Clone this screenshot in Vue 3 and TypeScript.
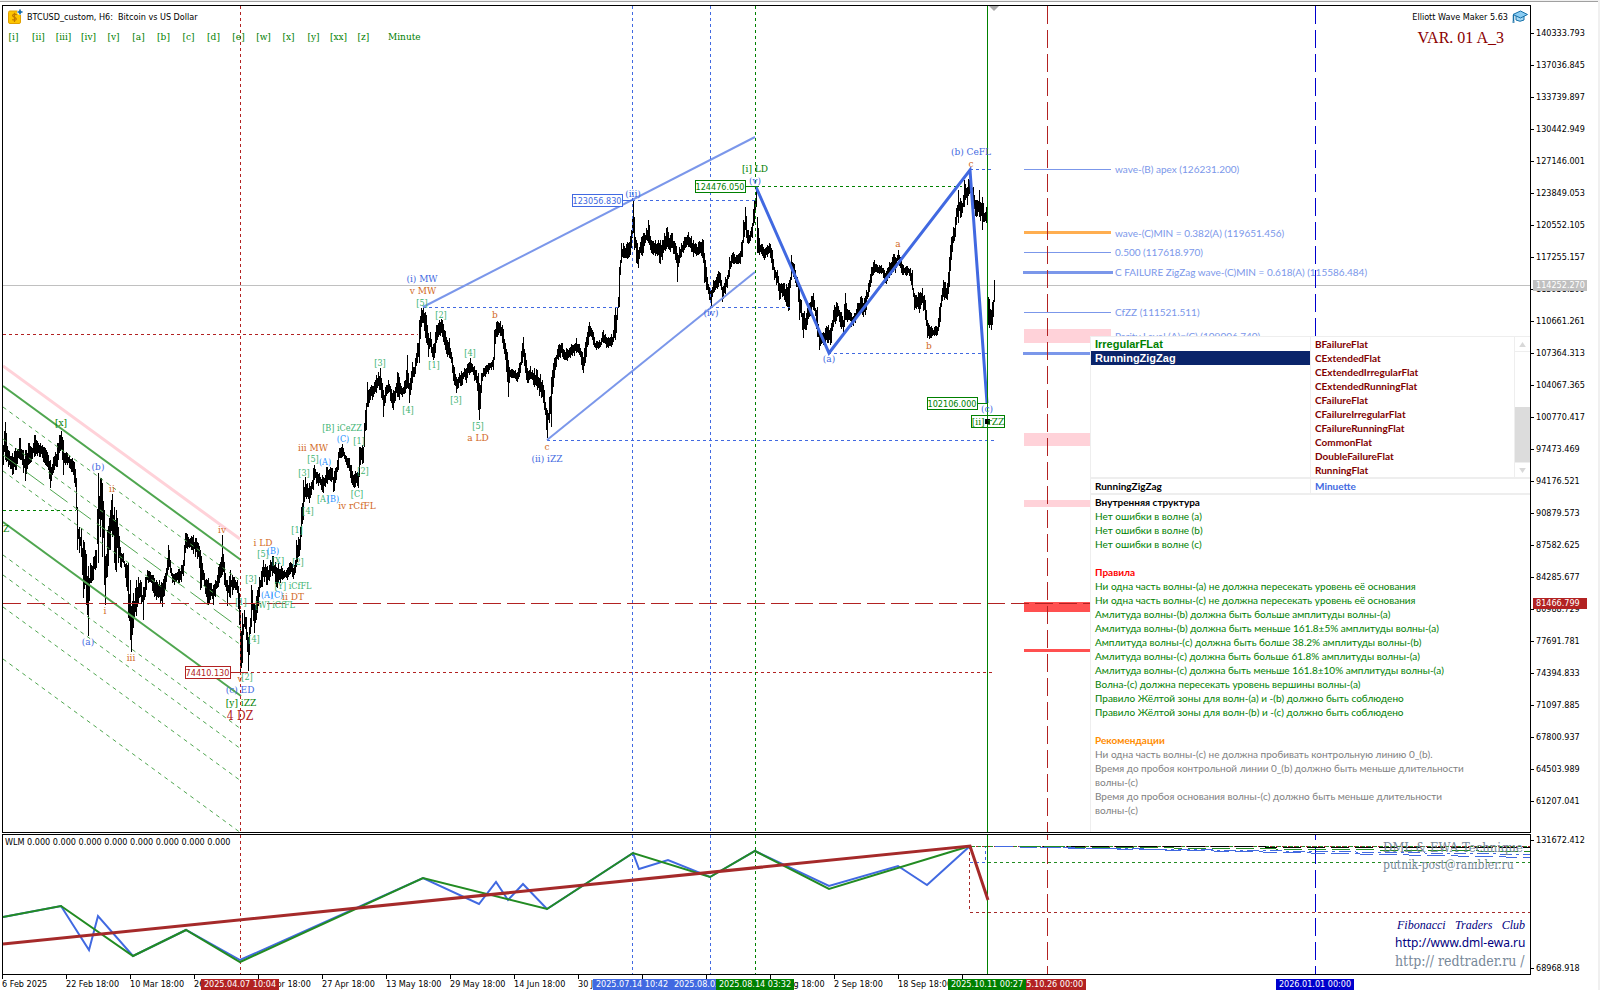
<script setup lang="ts">
type Band = [number, number, number]
type Point = [number, number]

interface WaveLabel {
  t: string
  x: number
  y: number
  k: string
}

interface Tag {
  t: string
  x: number
  k: string
}

const degrees = ['[i]', '[ii]', '[iii]', '[iv]', '[v]', '[a]', '[b]', '[c]', '[d]', '[e]', '[w]', '[x]', '[y]', '[xx]', '[z]']

// Price envelope: x, highest y, lowest y
const bands: Band[] = [
  [3, 445, 465], [5, 422, 460], [8, 450, 467], [12, 453, 475], [15, 448, 470], [20, 438, 460], [23, 450, 473], [25, 450, 481],
  [28, 443, 465], [31, 447, 462], [34, 435, 457], [38, 443, 453], [42, 445, 458], [45, 448, 465], [48, 455, 470], [50, 460, 488],
  [53, 457, 473], [57, 443, 467], [59, 435, 453], [61, 431, 450], [63, 440, 475], [65, 453, 465], [68, 457, 463], [72, 458, 472],
  [74, 462, 483], [76, 478, 510], [77, 507, 550], [79, 527, 553], [81, 528, 557], [83, 540, 598], [85, 550, 585], [88, 566, 636],
  [90, 563, 583], [93, 557, 580], [96, 550, 568], [98, 473, 563], [100, 478, 537], [102, 483, 557], [104, 510, 585], [105, 556, 605],
  [107, 530, 577], [110, 510, 550], [112, 494, 537], [114, 507, 563], [116, 510, 572], [118, 527, 563], [120, 547, 567], [123, 553, 563],
  [126, 563, 587], [128, 563, 618], [130, 580, 640], [131, 606, 652], [133, 593, 628], [136, 580, 616], [138, 577, 603], [140, 580, 597],
  [143, 587, 620], [145, 577, 597], [147, 570, 580], [150, 572, 582], [153, 575, 593], [156, 580, 600], [159, 580, 597], [162, 583, 607],
  [165, 573, 590], [167, 558, 575], [168, 545, 570], [170, 560, 573], [172, 573, 583], [175, 573, 582], [180, 571, 580], [183, 560, 576],
  [185, 533, 553], [188, 537, 547], [192, 537, 550], [195, 538, 557], [198, 543, 557], [200, 550, 590], [203, 570, 580], [207, 580, 603],
  [210, 583, 600], [213, 585, 605], [215, 580, 597], [218, 567, 587], [221, 557, 577], [222, 535, 575], [224, 562, 585], [227, 580, 606],
  [230, 570, 598], [233, 577, 590], [237, 580, 593], [239, 593, 625], [240, 610, 672], [242, 613, 663], [244, 610, 627], [246, 617, 640],
  [248, 637, 671], [249, 627, 655], [251, 585, 627], [252, 590, 610], [254, 603, 633], [257, 590, 613], [259, 577, 597], [262, 567, 587],
  [263, 560, 577], [266, 567, 585], [268, 570, 580], [270, 560, 577], [273, 556, 573], [276, 567, 587], [278, 563, 583], [282, 568, 580],
  [285, 572, 577], [288, 567, 577], [291, 563, 572], [293, 568, 579], [295, 560, 573], [296, 540, 567], [298, 537, 557], [300, 527, 550],
  [301, 507, 537], [303, 480, 520], [305, 477, 497], [307, 483, 497], [309, 483, 503], [311, 482, 495], [313, 468, 490], [314, 465, 480],
  [317, 472, 483], [320, 477, 485], [323, 477, 493], [326, 467, 483], [328, 470, 480], [332, 468, 480], [333, 477, 492], [336, 467, 480],
  [338, 452, 470], [339, 448, 458], [342, 444, 457], [345, 455, 462], [348, 458, 468], [351, 465, 483], [353, 475, 487], [356, 473, 483],
  [358, 473, 488], [359, 447, 477], [361, 448, 460], [363, 447, 463], [364, 423, 447], [366, 403, 430], [367, 382, 407], [370, 387, 400],
  [375, 380, 392], [380, 368, 390], [383, 390, 417], [385, 387, 403], [388, 380, 393], [393, 390, 410], [397, 372, 397], [402, 388, 397],
  [405, 380, 393], [407, 355, 388], [409, 383, 403], [412, 362, 383], [414, 367, 377], [417, 343, 363], [419, 320, 363], [421, 308, 327],
  [423, 308, 323], [426, 315, 343], [428, 333, 357], [430, 332, 347], [432, 347, 357], [434, 343, 358], [436, 325, 343], [438, 323, 337],
  [442, 320, 337], [444, 330, 345], [447, 340, 357], [449, 338, 358], [452, 357, 373], [454, 367, 385], [456, 377, 393], [459, 373, 383],
  [462, 373, 385], [464, 368, 377], [466, 368, 383], [468, 363, 373], [470, 358, 373], [473, 367, 375], [476, 370, 383], [478, 373, 410],
  [479, 383, 420], [481, 373, 393], [483, 368, 377], [487, 365, 372], [490, 363, 368], [493, 357, 370], [494, 330, 360], [496, 322, 337],
  [499, 323, 333], [502, 325, 343], [505, 343, 360], [508, 360, 397], [510, 370, 377], [513, 370, 378], [517, 372, 382], [520, 362, 373],
  [523, 337, 357], [525, 353, 373], [527, 368, 383], [532, 370, 380], [537, 370, 390], [542, 380, 397], [544, 390, 410], [547, 410, 438],
  [549, 397, 423], [551, 377, 427], [553, 363, 387], [555, 357, 370], [558, 345, 360], [561, 343, 353], [564, 350, 360], [568, 350, 358],
  [573, 345, 353], [576, 338, 353], [580, 348, 357], [583, 357, 373], [586, 337, 357], [589, 322, 337], [592, 330, 340], [595, 343, 348],
  [600, 342, 347], [603, 330, 343], [607, 338, 347], [612, 337, 345], [615, 308, 340], [617, 308, 320], [619, 267, 307], [621, 243, 263],
  [625, 248, 258], [629, 242, 257], [631, 230, 248], [633, 201, 233], [634, 217, 250], [636, 240, 263], [638, 250, 268], [640, 242, 253],
  [643, 233, 253], [645, 235, 243], [648, 220, 243], [651, 240, 253], [654, 243, 253], [657, 243, 256], [659, 243, 263], [662, 240, 260],
  [664, 233, 250], [667, 227, 247], [669, 238, 250], [672, 233, 248], [675, 243, 260], [677, 253, 282], [679, 247, 263], [682, 245, 252],
  [685, 237, 248], [688, 232, 247], [690, 238, 248], [693, 240, 257], [697, 247, 255], [700, 242, 253], [703, 240, 263], [704, 253, 283],
  [707, 277, 290], [709, 287, 300], [711, 290, 306], [713, 280, 293], [716, 277, 288], [719, 272, 283], [721, 280, 290], [722, 287, 302],
  [724, 283, 293], [727, 275, 288], [729, 257, 277], [732, 253, 263], [735, 257, 263], [739, 253, 263], [742, 240, 257], [743, 220, 243],
  [745, 207, 230], [747, 230, 243], [749, 235, 243], [752, 223, 238], [754, 200, 223], [756, 187, 207], [757, 217, 253], [760, 245, 252],
  [763, 247, 258], [766, 247, 255], [769, 243, 253], [772, 250, 270], [774, 267, 280], [777, 270, 283], [779, 283, 300], [781, 283, 293],
  [784, 283, 300], [787, 287, 307], [789, 280, 310], [791, 255, 280], [793, 263, 277], [795, 270, 283], [797, 277, 287], [799, 283, 320],
  [801, 300, 317], [803, 313, 338], [806, 313, 330], [809, 303, 317], [813, 293, 310], [817, 307, 337], [819, 330, 350], [822, 333, 343],
  [827, 327, 343], [831, 323, 343], [833, 310, 327], [837, 303, 317], [840, 312, 327], [843, 320, 333], [845, 293, 320], [848, 310, 320],
  [852, 317, 325], [855, 313, 323], [857, 303, 317], [860, 297, 313], [863, 303, 317], [866, 290, 310], [868, 283, 297], [871, 267, 283],
  [874, 260, 273], [878, 267, 273], [882, 268, 273], [885, 273, 283], [888, 267, 277], [892, 257, 272], [895, 257, 273], [898, 250, 260],
  [901, 258, 273], [904, 268, 273], [908, 268, 273], [912, 270, 290], [914, 293, 310], [917, 297, 307], [919, 293, 313], [922, 288, 303],
  [925, 300, 320], [927, 320, 338], [930, 327, 338], [933, 330, 335], [937, 327, 335], [939, 307, 327], [943, 280, 297], [947, 283, 300],
  [949, 257, 287], [951, 237, 260], [953, 227, 243], [955, 217, 237], [958, 190, 223], [962, 203, 213], [964, 180, 207], [967, 187, 205],
  [970, 171, 193], [973, 187, 210], [976, 200, 217], [979, 190, 217], [982, 197, 230], [984, 213, 222], [986, 207, 223], [987, 223, 297],
  [988, 297, 325], [991, 310, 330], [993, 300, 317], [994, 280, 302],
]

function buildBars(): string {
  let seed = 7
  const rnd = (): number => {
    seed = (seed * 16807) % 2147483647
    return seed / 2147483647
  }
  const out: string[] = []
  for (let i = 0; i < bands.length - 1; i++) {
    const [x0, t0, b0] = bands[i]
    const [x1, t1, b1] = bands[i + 1]
    for (let x = x0; x < x1; x++) {
      const f = (x - x0) / (x1 - x0)
      const top = t0 + (t1 - t0) * f
      const bottom = b0 + (b1 - b0) * f
      const span = bottom - top
      const exact = x === x0
      const a = exact ? top : top + rnd() * span * 0.5 - 3
      const b = exact ? bottom : bottom - rnd() * span * 0.5 + 3
      out.push(`M${x}.5 ${Math.round(a)}V${Math.max(Math.round(b), Math.round(a) + 4)}`)
    }
  }
  out.push('M994.5 280V302')
  return out.join('')
}
const bars = buildBars()

const channelDashes = [407, 439, 471, 555, 575, 607, 659]
const channelRun = 174

const labels: WaveLabel[] = [
  { t: '[x]', x: 61, y: 423, k: 'green' }, { t: '(b)', x: 98, y: 467, k: 'royal' }, { t: 'ii', x: 112, y: 489, k: 'choc' },
  { t: 'iv', x: 222, y: 530, k: 'choc' }, { t: 'i LD', x: 263, y: 543, k: 'choc' }, { t: '[5]', x: 263, y: 554, k: 'sea' },
  { t: '(B)', x: 273, y: 551, k: 'dodger' }, { t: '[X]', x: 278, y: 561, k: 'sea' }, { t: '[3]', x: 251, y: 579, k: 'sea' },
  { t: '[1]', x: 241, y: 602, k: 'sea' }, { t: '[Y] iCfFL', x: 293, y: 586, k: 'sea' }, { t: '(A)', x: 267, y: 595, k: 'dodger' },
  { t: '(C)', x: 277, y: 595, k: 'dodger' }, { t: 'ii DT', x: 293, y: 597, k: 'choc' }, { t: '[W] iCfFL', x: 275, y: 605, k: 'sea' },
  { t: '[4]', x: 254, y: 639, k: 'sea' }, { t: 'i', x: 105, y: 611, k: 'choc' }, { t: '(a)', x: 88, y: 642, k: 'royal' },
  { t: 'iii', x: 131, y: 658, k: 'choc' }, { t: 'v', x: 240, y: 679, k: 'choc' }, { t: '[2]', x: 247, y: 677, k: 'sea' },
  { t: '(c) ED', x: 240, y: 690, k: 'royal' }, { t: '[y] iZZ', x: 241, y: 703, k: 'green' }, { t: '4 DZ', x: 240, y: 717, k: 'brick' },
  { t: '[1]', x: 297, y: 530, k: 'sea' }, { t: '[2]', x: 298, y: 562, k: 'sea' }, { t: '[4]', x: 308, y: 511, k: 'sea' },
  { t: '[3]', x: 304, y: 473, k: 'sea' }, { t: 'iii MW', x: 313, y: 448, k: 'choc' }, { t: '[5]', x: 313, y: 459, k: 'sea' },
  { t: '(A)', x: 325, y: 462, k: 'dodger' }, { t: '[A]', x: 323, y: 499, k: 'sea' }, { t: '(B)', x: 333, y: 499, k: 'dodger' },
  { t: 'iv rCfFL', x: 357, y: 506, k: 'choc' }, { t: '[C]', x: 357, y: 494, k: 'sea' }, { t: '[B] iCeZZ', x: 342, y: 428, k: 'sea' },
  { t: '(C)', x: 343, y: 439, k: 'dodger' }, { t: '[1]', x: 359, y: 441, k: 'sea' }, { t: '[2]', x: 363, y: 471, k: 'sea' },
  { t: '[4]', x: 408, y: 410, k: 'sea' }, { t: '[3]', x: 380, y: 363, k: 'sea' }, { t: '[5]', x: 422, y: 303, k: 'sea' },
  { t: 'v MW', x: 423, y: 291, k: 'choc' }, { t: '(i) MW', x: 422, y: 279, k: 'royal' }, { t: '[2]', x: 441, y: 315, k: 'sea' },
  { t: '[1]', x: 434, y: 365, k: 'sea' }, { t: '[4]', x: 470, y: 353, k: 'sea' }, { t: '[3]', x: 456, y: 400, k: 'sea' },
  { t: '[5]', x: 478, y: 426, k: 'sea' }, { t: 'a LD', x: 478, y: 438, k: 'choc' }, { t: 'b', x: 495, y: 315, k: 'choc' },
  { t: 'c', x: 547, y: 447, k: 'choc' }, { t: '(ii) iZZ', x: 547, y: 459, k: 'royal' }, { t: '(iii)', x: 633, y: 194, k: 'royal' },
  { t: '(iv)', x: 711, y: 313, k: 'royal' }, { t: '[i] LD', x: 755, y: 169, k: 'green' }, { t: '(v)', x: 755, y: 181, k: 'royal' },
  { t: '(a)', x: 829, y: 359, k: 'royal' }, { t: 'a', x: 898, y: 244, k: 'choc' }, { t: 'b', x: 929, y: 346, k: 'choc' },
  { t: 'c', x: 971, y: 164, k: 'choc' }, { t: '(b) CeFL', x: 971, y: 152, k: 'royal' }, { t: '(c)', x: 987, y: 409, k: 'royal' },
  { t: '[ii] rZZ', x: 988, y: 422, k: 'green' }, { t: 'Z', x: 6, y: 529, k: 'green' },
]

const priceTags = [
  { t: '123056.830', x: 572, y: 194, w: 50, k: 'royal', to: 632 },
  { t: '124476.050', x: 695, y: 180, w: 50, k: 'green', to: 756 },
  { t: '102106.000', x: 927, y: 397, w: 50, k: 'green', to: 987 },
  { t: '74410.130', x: 185, y: 666, w: 45, k: 'brick', to: 245 },
]

const levelTexts = [
  { t: 'wave-(B) apex (126231.200)', y: 170 },
  { t: 'wave-(C)MIN = 0.382(A) (119651.456)', y: 234 },
  { t: '0.500 (117618.970)', y: 253 },
  { t: 'C FAILURE ZigZag wave-(C)MIN = 0.618(A) (115586.484)', y: 273 },
  { t: 'CfZZ (111521.511)', y: 313 },
  { t: 'Parity Level (A)=(C) (109006.740)', y: 337 },
]

const prices = Array.from({ length: 25 }, (_, i) => (140333.793 - 3296.948 * i).toFixed(3))

const dates = ['6 Feb 2025', '22 Feb 18:00', '10 Mar 18:00', '26 Mar 18:00', '11 Apr 18:00', '27 Apr 18:00', '13 May 18:00', '29 May 18:00', '14 Jun 18:00', '30 Jun 18:00', '16 Jul 18:00', '1 Aug 18:00', '17 Aug 18:00', '2 Sep 18:00', '18 Sep 18:00', '4 Oct 18:00']

const dateTags: Tag[] = [
  { t: '2025.04.07 10:04', x: 240, k: 'bg-brick' },
  { t: '2025.07.14 10:42', x: 632, k: 'bg-royal' },
  { t: '2025.08.03 09:13', x: 710, k: 'bg-royal' },
  { t: '2025.08.14 03:32', x: 755, k: 'bg-green' },
  { t: '2025.10.26 00:00', x: 1047, k: 'bg-brick' },
  { t: '2025.10.11 00:27', x: 987, k: 'bg-green' },
  { t: '2026.01.01 00:00', x: 1315, k: 'bg-blue' },
]

const pts = (p: Point[]): string => p.map((q) => q.join(',')).join(' ')
const greenWave = pts([[3, 917], [61, 906], [133, 956], [186, 930], [240, 962], [423, 878], [547, 909], [633, 853], [710, 877], [755, 851], [829, 889], [970, 846]])
const blueWave = pts([[3, 917], [61, 906], [89, 950], [98, 916], [133, 956], [186, 930], [240, 960], [423, 878], [479, 904], [496, 882], [508, 900], [523, 884], [547, 909], [633, 853], [639, 869], [668, 860], [710, 877], [755, 851], [829, 886], [898, 866], [927, 885], [970, 846]])
const redWave = pts([[3, 944], [970, 846], [988, 900]])

const patterns = ['BFailureFlat', 'CExtendedFlat', 'CExtendedIrregularFlat', 'CExtendedRunningFlat', 'CFailureFlat', 'CFailureIrregularFlat', 'CFailureRunningFlat', 'CommonFlat', 'DoubleFailureFlat', 'RunningFlat']

const structure = ['Нет ошибки в волне (a)', 'Нет ошибки в волне (b)', 'Нет ошибки в волне (c)']
const rules = [
  'Ни одна часть волны-(a) не должна пересекать уровень её основания',
  'Ни одна часть волны-(c) не должна пересекать уровень её основания',
  'Амлитуда волны-(b) должна быть больше амплитуды волны-(a)',
  'Амлитуда волны-(b) должна быть меньше 161.8±5% амплитуды волны-(a)',
  'Амплитуда волны-(c) должна быть болше 38.2% амплитуды волны-(b)',
  'Амлитуда волны-(c) должна быть больше 61.8% амплитуды волны-(a)',
  'Амлитуда волны-(c) должна быть меньше 161.8±10% амплитуды волны-(a)',
  'Волна-(c) должна пересекать уровень вершины волны-(a)',
  'Правило Жёлтой зоны для волн-(a) и -(b) должно быть соблюдено',
  'Правило Жёлтой зоны для волн-(b) и -(c) должно быть соблюдено',
]
const advice = [
  'Ни одна часть волны-(c) не должна пробивать контрольную линию 0_(b).',
  'Время до пробоя контрольной линии 0_(b) должно быть меньше длительности волны-(c)',
  'Время до пробоя основания волны-(c) должно быть меньше длительности волны-(c)',
]
</script>

<template>
  <main class="terminal">
    <section class="pane price-pane" aria-label="BTCUSD chart">
      <svg class="canvas" aria-hidden="true">
        <g transform="translate(-3 -6)">
          <path d="M989 6h10l-5 5z" fill="#a9a9a9" />
          <g class="crisp">
            <line class="silver" x1="3" x2="1530" y1="285.5" y2="285.5" />
            <rect x="1024" y="169" width="87" height="1" class="level" />
            <rect x="1024" y="231" width="87" height="3" fill="#ffae50" />
            <rect x="1024" y="252" width="87" height="1" class="level" />
            <rect x="1023" y="271" width="90" height="3" class="level" />
            <rect x="1024" y="312" width="87" height="1" class="level" />
            <rect x="1024" y="329" width="87" height="14" class="zone" />
            <rect x="1023" y="352" width="90" height="3" class="level" />
            <rect x="1024" y="433" width="87" height="13" class="zone" />
            <rect x="1024" y="500" width="87" height="7" class="zone" />
            <rect x="1024" y="602" width="87" height="10" class="alert" />
            <rect x="1024" y="649" width="87" height="3" class="alert" />
            <path :d="bars" class="bars" />
          </g>
          <line class="pink-line" x1="3" y1="366" x2="240" y2="539" />
          <line class="channel" x1="3" y1="386" x2="241" y2="560" />
          <line class="channel" x1="3" y1="522" x2="241" y2="696" />
          <line v-for="y in channelDashes" :key="y" class="channel-dash" x1="3" :y1="y" x2="241" :y2="y + channelRun" />
          <line class="channel-long" x1="3" y1="455" x2="241" y2="629" />
          <g class="crisp">
            <line class="dash s-green" x1="3" x2="76" y1="510.5" y2="510.5" />
            <line class="dash s-brick" x1="3" x2="418" y1="334.5" y2="334.5" />
            <line class="long s-brick" x1="3" x2="1100" y1="603.5" y2="603.5" />
            <line class="dash s-brick" x1="245" x2="994" y1="672.5" y2="672.5" />
            <line class="dash s-royal" x1="423" x2="618" y1="307.5" y2="307.5" />
            <line class="dash s-royal" x1="710" x2="790" y1="307.5" y2="307.5" />
            <line class="dash s-royal" x1="632" x2="755" y1="200.5" y2="200.5" />
            <line class="dash s-green" x1="756" x2="962" y1="186.5" y2="186.5" />
            <line class="dash s-royal" x1="970" x2="992" y1="169.5" y2="169.5" />
            <line class="dash s-royal" x1="828" x2="987" y1="353.5" y2="353.5" />
            <line class="dash s-royal" x1="547" x2="994" y1="440.5" y2="440.5" />
          </g>
          <polyline class="trend" points="423,307 755,137" />
          <polyline class="trend" points="547,440 755,272" />
          <polyline class="wave" points="756,187 829,353 970,170 987,403" />
          <g class="crisp">
            <line class="dash s-brick" x1="240.5" x2="240.5" y1="6" y2="832" />
            <line class="dash s-royal" x1="632.5" x2="632.5" y1="6" y2="832" />
            <line class="dash s-royal" x1="710.5" x2="710.5" y1="6" y2="832" />
            <line class="dash s-green" x1="755.5" x2="755.5" y1="6" y2="832" />
            <line class="s-green" x1="987.5" x2="987.5" y1="6" y2="832" />
            <line class="long s-brick" x1="1047.5" x2="1047.5" y1="6" y2="832" />
            <line class="long s-blue" x1="1315.5" x2="1315.5" y1="6" y2="832" />
            <rect x="971.5" y="415.5" width="33" height="12" class="s-green hollow" />
            <rect x="985" y="419" width="5" height="5" />
          </g>
          <g v-for="p in priceTags" :key="p.t" :class="'t-' + p.k">
            <line :x1="p.x + p.w" :x2="p.to" :y1="p.y + 6.5" :y2="p.y + 6.5" :class="'crisp s-' + p.k" />
            <rect :x="p.x + 0.5" :y="p.y + 0.5" :width="p.w" height="12" class="crisp tag-box" :class="'s-' + p.k" />
            <text class="tag-text" :x="p.x + p.w / 2" :y="p.y + 10">{{ p.t }}</text>
          </g>
          <text v-for="(l, i) in labels" :key="i" :x="l.x" :y="l.y + 3" class="wave-label" :class="'t-' + l.k">{{ l.t }}</text>
          <text v-for="l in levelTexts" :key="l.t" x="1115" :y="l.y + 3" class="level-text">{{ l.t }}</text>
        </g>
      </svg>

      <header class="title-row">
        <svg class="coin" viewBox="0 0 15 15" aria-hidden="true">
          <rect x="0.5" y="2" width="12" height="12.5" rx="1.5" fill="#fdc500" stroke="#e0a000" />
          <path d="M8.800 5.800Q6.500 4.600 5 5.700T6.200 8.100T8.200 10.500T4.200 10.700M6.500 3.700V13" fill="none" stroke="#c27a00" stroke-width="1.200" />
          <path d="M12 0v6M9 3h6" stroke="#fff" stroke-width="3" />
          <path d="M12 0.500v5M9.500 3h5" stroke="#0a64a8" stroke-width="1.600" />
        </svg>
        <h1>BTCUSD_custom, H6:&nbsp; Bitcoin vs US Dollar</h1>
        <span class="expert">Elliott Wave Maker 5.63</span>
        <svg class="cap" viewBox="0 0 16 13" aria-hidden="true">
          <path d="M4 6v4q4 2.500 8 0V6" fill="#a5d8f5" stroke="#1670a8" />
          <path d="M1 4.500L8.500 1L15.500 4.500L8.500 8Z" fill="#8accf2" stroke="#1670a8" />
          <path d="M1.500 5v6M0.500 12h2" stroke="#1670a8" stroke-width="1.500" />
        </svg>
      </header>
      <nav class="degrees" aria-label="Wave labels">
        <button v-for="d in degrees" :key="d" type="button">{{ d }}</button>
        <button type="button" class="degree-name">Minute</button>
        <strong class="variant">VAR. 01 A_3</strong>
      </nav>

      <aside class="analysis" aria-label="Wave analysis">
        <div class="lists">
          <div class="list models">
            <button type="button" class="model">IrregularFLat</button>
            <button type="button" class="model selected" aria-pressed="true">RunningZigZag</button>
          </div>
          <div class="list patterns">
            <button v-for="p in patterns" :key="p" type="button">{{ p }}</button>
          </div>
          <div class="scroll">
            <button type="button" aria-label="Scroll up"><svg viewBox="0 0 8 6"><path d="M4 0L8 6H0Z" /></svg></button>
            <div class="track"><div class="thumb"></div></div>
            <button type="button" aria-label="Scroll down"><svg viewBox="0 0 8 6"><path d="M0 0H8L4 6Z" /></svg></button>
          </div>
        </div>
        <div class="summary">
          <span class="picked">RunningZigZag</span>
          <span class="degree">Minuette</span>
        </div>
        <div class="report">
          <h2 class="head-black">Внутренняя структура</h2>
          <p v-for="s in structure" :key="s" class="ok">{{ s }}</p>
          <h2 class="head-red">Правила</h2>
          <p v-for="s in rules" :key="s" class="ok">{{ s }}</p>
          <h2 class="head-orange">Рекомендации</h2>
          <p v-for="s in advice" :key="s" class="hint">{{ s }}</p>
        </div>
      </aside>
    </section>

    <aside class="axis price-axis" aria-label="Price scale">
      <span v-for="p in prices" :key="p" class="price">{{ p }}</span>
      <span class="price-tag last">114252.270</span>
      <span class="price-tag stop">81466.799</span>
    </aside>

    <section class="pane wave-pane" aria-label="WLM indicator">
      <svg class="canvas" aria-hidden="true">
        <g transform="translate(-3 -835)">
          <g class="crisp">
            <line class="dash s-brick" x1="240.5" x2="240.5" y1="835" y2="974" />
            <line class="dash s-royal" x1="632.5" x2="632.5" y1="835" y2="974" />
            <line class="dash s-royal" x1="710.5" x2="710.5" y1="835" y2="974" />
            <line class="dash s-green" x1="755.5" x2="755.5" y1="835" y2="974" />
            <line class="s-green" x1="987.5" x2="987.5" y1="835" y2="974" />
            <line class="long s-brick" x1="1047.5" x2="1047.5" y1="822" y2="974" />
            <line class="long s-blue" x1="1315.5" x2="1315.5" y1="822" y2="974" />
            <line class="dash s-brown" x1="970" x2="1530" y1="912.5" y2="912.5" />
            <line class="dash s-brown" x1="969.5" x2="969.5" y1="846" y2="912" />
            <line class="dash s-forest" x1="970" x2="1530" y1="862.5" y2="862.5" />
            <polyline class="dash s-royal" points="970,862.5 985.5,862.5 985.5,846" />
            <line class="dash s-brown" x1="970" x2="1530" y1="846.5" y2="846.5" />
            <line class="dash s-forest" x1="972" x2="1530" y1="846.5" y2="846.5" />
            <line class="long s-black" x1="995" x2="1530" y1="846.5" y2="847.5" />
            <line class="long s-forest" x1="1020" x2="1530" y1="846.5" y2="851.5" />
            <line class="long s-royal" x1="995" x2="1530" y1="846.5" y2="857.5" />
            <line class="dashdot s-royal" x1="1040" x2="1530" y1="847.5" y2="854.5" />
          </g>
          <polyline class="thin-wave s-royal" :points="blueWave" />
          <polyline class="thin-wave s-forest" :points="greenWave" />
          <polyline class="fat-wave" :points="redWave" />
        </g>
      </svg>
      <p class="readout">WLM 0.000 0.000 0.000 0.000 0.000 0.000 0.000 0.000</p>
      <div class="credits">
        <p class="slate technique">DML &amp; EWA Technique</p>
        <p class="slate mail">putnik-post@rambler.ru</p>
        <p class="club"><span>Fibonacci</span><span>Traders</span><span>Club</span></p>
        <a class="site" href="http://www.dml-ewa.ru">http://www.dml-ewa.ru</a>
        <a class="slate second" href="http://redtrader.ru/">http:// redtrader.ru /</a>
      </div>
    </section>

    <aside class="axis wave-axis" aria-label="Indicator scale">
      <span>131672.412</span>
      <span>68968.918</span>
    </aside>

    <footer class="axis time-axis" aria-label="Time scale">
      <span v-for="d in dates" :key="d" class="date">{{ d }}</span>
      <span v-for="d in dateTags" :key="d.t" class="date-tag" :class="d.k" :style="{ left: d.x - 41 + 'px' }">{{ d.t }}</span>
    </footer>
  </main>
</template>

<style>
body {
  margin: 0;
  background: #fff;
}
</style>

<style scoped>
* {
  box-sizing: border-box;
}
h1, h2, p {
  margin: 0;
  font-size: inherit;
  font-weight: inherit;
}
button {
  display: block;
  margin: 0;
  padding: 0;
  border: 0;
  background: none;
  font: inherit;
  color: inherit;
  text-align: left;
  cursor: pointer;
}
.terminal {
  display: grid;
  grid-template-columns: minmax(0, 1fr) 67px;
  grid-template-rows: minmax(0, 1fr) 142px 15px;
  height: 100vh;
  min-height: 800px;
  padding: 4px 0 0 2px;
  border-top: 1px solid #f0f0f0;
  border-right: 2px solid #f0f0f0;
  box-shadow: inset 0 1px 0 #a0a0a0;
  font-family: "DejaVu Sans Condensed", "Noto Sans", sans-serif;
  font-size: 9px;
  line-height: 14px;
  color: #000;
  overflow: hidden;
}
.pane {
  position: relative;
  border: 1px solid #000;
  overflow: hidden;
}
.wave-pane {
  margin-top: 1px;
}
.canvas {
  position: absolute;
  inset: 0;
  width: 100%;
  height: 100%;
}
.crisp {
  shape-rendering: crispEdges;
}
.silver { stroke: #c0c0c0; }
.level { fill: #7b97ea; }
.zone { fill: #ffd2d9; }
.alert { fill: #ff5050; }
.bars { stroke: #000; stroke-width: 1; }
.pink-line { stroke: #ffd2d9; stroke-width: 3; }
.channel { stroke: #4fa64f; stroke-width: 2; }
.channel-dash { stroke: #4fa64f; stroke-width: 1; stroke-dasharray: 4 4; }
.channel-long { stroke: #4fa64f; stroke-width: 1; stroke-dasharray: 22 7; }
.dash { stroke-dasharray: 3 3; }
.long { stroke-dasharray: 18 6; }
.dashdot { stroke-dasharray: 12 4 3 4; }
.s-green { stroke: #008000; }
.s-brick { stroke: #b22222; }
.s-royal { stroke: #4169e1; }
.s-blue { stroke: #0000cd; }
.s-brown { stroke: #a52a2a; }
.s-forest { stroke: #228b22; }
.s-black { stroke: #000; }
polyline { fill: none; }
.hollow { fill: none; }
.tag-box { fill: #fff; }
.trend { stroke: #7b97ea; stroke-width: 2; }
.wave { stroke: #4169e1; stroke-width: 3; }
.thin-wave { stroke-width: 2; }
.fat-wave { stroke: #a52a2a; stroke-width: 3; }
.wave-label {
  font-family: "DejaVu Serif Condensed", "DejaVu Serif", serif;
  font-size: 10px;
  text-anchor: middle;
}
.t-sea.wave-label, .t-dodger.wave-label { font-size: 9px; }
.t-brick.wave-label { font-size: 12px; }
.t-green { fill: #008000; }
.t-royal { fill: #4169e1; }
.t-choc { fill: #d2691e; }
.t-sea { fill: #3cb371; }
.t-dodger { fill: #1e90ff; }
.t-brick { fill: #b22222; }
.tag-text {
  font-size: 9px;
  text-anchor: middle;
}
.level-text {
  font-family: Lato, "Noto Sans", sans-serif;
  font-size: 10px;
  fill: #7b97ea;
}
.title-row {
  position: relative;
  display: flex;
  align-items: center;
  height: 21px;
  padding: 0 2px 0 5px;
}
.coin {
  width: 15px;
  height: 15px;
  margin-right: 4px;
}
.cap {
  width: 16px;
  height: 13px;
  margin-left: 4px;
}
.expert {
  margin-left: auto;
}
.degrees {
  position: relative;
  display: flex;
  align-items: center;
  height: 20px;
  margin-left: -2px;
  font-family: "DejaVu Serif Condensed", "DejaVu Serif", serif;
  font-size: 10px;
  color: #008000;
}
.degrees button {
  width: 25px;
  text-align: center;
}
.degrees .degree-name {
  width: auto;
  margin-left: 12px;
}
.variant {
  margin-left: auto;
  padding: 2px 26px 0 0;
  font: 16px "Liberation Serif", serif;
  color: #8b0000;
}
.analysis {
  position: absolute;
  top: 330px;
  right: 0;
  bottom: 0;
  width: 440px;
  border: solid #eee;
  border-width: 1px 0 0 1px;
  background: #fff;
  font-family: Lato, "Noto Sans", sans-serif;
  font-size: 10px;
}
.lists {
  display: grid;
  grid-template-columns: 1fr 204px 15px;
  height: 140px;
}
.models {
  font-family: "Liberation Sans", sans-serif;
  font-size: 11px;
}
.list {
  border-right: 1px solid #eee;
  font-weight: bold;
}
.list button {
  width: 100%;
  height: 14px;
  padding-left: 4px;
}
.model { color: #008000; }
.model.selected {
  background: #0a246a;
  color: #fff;
}
.patterns { color: #800000; }
.scroll {
  display: flex;
  flex-direction: column;
}
.scroll button {
  display: flex;
  align-items: center;
  justify-content: center;
  height: 14px;
}
.scroll svg {
  width: 7px;
  height: 5px;
  fill: #d8d8d8;
}
.track {
  display: flex;
  flex: 1;
  flex-direction: column;
  justify-content: flex-end;
  border: solid #eee;
  border-width: 1px 0;
}
.thumb {
  height: 55px;
  background: #dcdcdc;
}
.summary {
  display: grid;
  grid-template-columns: 1fr 220px;
  border: solid #eee;
  border-width: 2px 0;
  font-weight: bold;
}
.summary span {
  padding-left: 4px;
}
.summary .degree {
  border-left: 1px solid #eee;
  color: #4169e1;
}
.report {
  padding: 0 60px 0 4px;
}
.report h2 {
  font-weight: bold;
}
.report p + h2 {
  margin-top: 14px;
}
.head-red { color: #f00; }
.head-orange { color: #ff8c00; }
.ok { color: #008000; }
.hint { color: #808080; }
.axis {
  position: relative;
  overflow: hidden;
}
.price-axis {
  display: flex;
  flex-direction: column;
  padding-top: 12px;
}
.price {
  display: flex;
  flex: none;
  align-items: center;
  height: 32px;
}
.price::before, .wave-axis span::before {
  width: 3px;
  height: 1px;
  margin-right: 2px;
  background: #000;
  content: "";
}
.price-tag {
  position: absolute;
  left: 2px;
  width: 54px;
  padding-left: 3px;
  line-height: 11px;
  color: #fff;
}
.last {
  top: 275px;
  background: #c0c0c0;
}
.stop {
  top: 593px;
  background: #b22222;
}
.wave-axis {
  display: flex;
  flex-direction: column;
  justify-content: space-between;
}
.wave-axis span {
  display: flex;
  align-items: center;
}
.readout {
  position: relative;
  padding-left: 2px;
}
.credits {
  position: absolute;
  top: 4px;
  right: 5px;
  display: flex;
  flex-direction: column;
  width: 142px;
  font-family: "DejaVu Serif Condensed", "DejaVu Serif", serif;
  font-size: 12px;
  line-height: 18px;
  white-space: nowrap;
}
.credits a {
  text-decoration: none;
}
.credits .slate {
  color: #778899;
}
.credits .technique {
  font-size: 13px;
}
.credits .mail {
  line-height: 16px;
}
.club {
  display: flex;
  justify-content: space-between;
  margin: 43px 0 0 14px;
  font-family: "Liberation Serif", serif;
  font-style: italic;
  font-size: 12px;
  color: #000080;
}
.credits .site {
  margin-left: 12px;
  font-family: "Noto Sans", sans-serif;
  color: #000080;
}
.credits .second {
  margin-left: 12px;
  font-size: 14px;
}
.time-axis {
  display: flex;
  grid-column: 1 / -1;
  line-height: 11px;
}
.date {
  position: relative;
  flex: none;
  width: 64px;
  padding-top: 4px;
  white-space: nowrap;
}
.date::before {
  position: absolute;
  top: 0;
  left: 0;
  width: 1px;
  height: 4px;
  background: #000;
  content: "";
}
.date-tag {
  position: absolute;
  top: 4px;
  width: 78px;
  color: #fff;
  text-align: center;
  white-space: nowrap;
}
.bg-brick { background: #b22222; }
.bg-royal { background: #4169e1; }
.bg-green { background: #008000; }
.bg-blue { background: #0000cd; }
</style>
